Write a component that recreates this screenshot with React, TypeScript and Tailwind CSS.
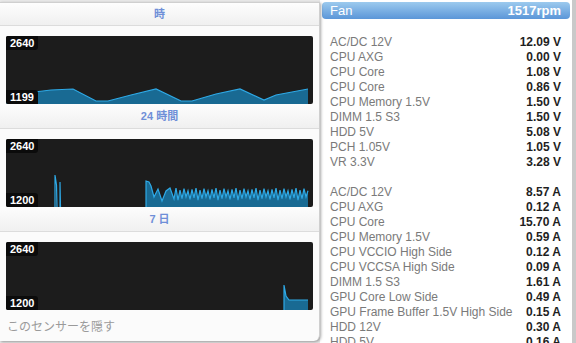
import React from 'react'

const CH_W = 304
const CH_H = 68

function hourPoints(): [number, number][] {
  return [
    [0, 62], [20, 57], [45, 54], [67, 53], [90, 65], [102, 65], [125, 59], [150, 53],
    [175, 65], [186, 65], [210, 58], [234, 53], [258, 64], [270, 59], [302, 53],
  ]
}

function dayPoints(): [number, number][] {
  const pts: [number, number][] = [
    [140, 68], [140, 42], [143, 43], [145, 47], [148, 58], [152, 50], [156, 62],
    [160, 52], [164, 49], [168, 60],
  ]
  let up = true
  for (let x = 170; x <= 302; x += 2) {
    const v = (x * 7) % 5
    pts.push([x, up ? 49 + v * 0.7 : 58 + v * 0.8])
    up = !up
  }
  return pts
}

function weekPoints(): [number, number][] {
  return [[278, 68], [278, 43], [280, 54], [283, 58], [302, 58]]
}

function toPath(pts: [number, number][]) {
  return pts.map((p, i) => `${i === 0 ? 'M' : 'L'}${p[0]},${p[1]}`).join(' ')
}

function Chart({ pts, min, spikes }: { pts: [number, number][]; min: string; spikes?: boolean }) {
  const line = toPath(pts)
  const fill = `${line} L${pts[pts.length - 1][0]},${CH_H} L${pts[0][0]},${CH_H} Z`
  return (
    <div className="relative mx-[6px] h-[68px] overflow-hidden rounded-[2px] bg-[#1c1c1c]">
      <svg width={CH_W} height={CH_H} className="absolute inset-0">
        {spikes && (
          <g stroke="#2ea9e6" strokeWidth="1.2" fill="none">
            <path d="M49,68 L49,36 L50.5,46 L51,68" />
            <path d="M54,68 L54,43 L54.5,68" />
          </g>
        )}
        <path d={fill} fill="#196a93" />
        <path d={line} fill="none" stroke="#2ea9e6" strokeWidth="1.2" />
      </svg>
      <div className="absolute left-0 top-0 rounded-br-[3px] bg-[#0b0b0b] px-[4px] py-[1px] text-[11px] font-bold leading-[12px] text-white">
        2640
      </div>
      <div className="absolute bottom-0 left-0 rounded-tr-[3px] bg-[#0b0b0b] px-[4px] py-[1px] text-[11px] font-bold leading-[12px] text-white">
        {min}
      </div>
    </div>
  )
}

function Header({ label, h }: { label: string; h: string }) {
  return (
    <div
      className={`${h} flex items-center justify-center border-b border-[#dcdcdc] bg-gradient-to-b from-[#fdfdfd] to-[#f0f0f0] text-[11px] font-bold text-[#6f8fd8]`}
    >
      {label}
    </div>
  )
}

const volts = [
  ['AC/DC 12V', '12.09 V'],
  ['CPU AXG', '0.00 V'],
  ['CPU Core', '1.08 V'],
  ['CPU Core', '0.86 V'],
  ['CPU Memory 1.5V', '1.50 V'],
  ['DIMM 1.5 S3', '1.50 V'],
  ['HDD 5V', '5.08 V'],
  ['PCH 1.05V', '1.05 V'],
  ['VR 3.3V', '3.28 V'],
]

const amps = [
  ['AC/DC 12V', '8.57 A'],
  ['CPU AXG', '0.12 A'],
  ['CPU Core', '15.70 A'],
  ['CPU Memory 1.5V', '0.59 A'],
  ['CPU VCCIO High Side', '0.12 A'],
  ['CPU VCCSA High Side', '0.09 A'],
  ['DIMM 1.5 S3', '1.61 A'],
  ['GPU Core Low Side', '0.49 A'],
  ['GPU Frame Buffer 1.5V High Side', '0.15 A'],
  ['HDD 12V', '0.30 A'],
  ['HDD 5V', '0.16 A'],
]

function Rows({ rows }: { rows: string[][] }) {
  return (
    <div className="flex flex-col">
      {rows.map(([k, v], i) => (
        <div key={i} className="flex h-[15px] items-center justify-between text-[12px]">
          <span className="text-[#7a7a7a]">{k}</span>
          <span className="font-bold text-[#1f1f1f]">{v}</span>
        </div>
      ))}
    </div>
  )
}

export default function App() {
  return (
    <div
      className="flex h-[343px] w-[576px] overflow-hidden bg-[#e9e9e9]"
      style={{ fontFamily: '"Liberation Sans", "Noto Sans CJK JP", sans-serif' }}
    >
      <div className="relative z-10 mt-[2px] flex h-[339px] w-[320px] shrink-0 flex-col rounded-br-[6px] border-t border-r border-[#cfcfcf] bg-[#fbfbfb] shadow-[1px_1px_3px_rgba(0,0,0,0.35)]">
        <Header label="時" h="h-[23px]" />
        <div className="pt-[10px]">
          <Chart pts={hourPoints()} min="1199" />
        </div>
        <Header label="24 時間" h="h-[25px]" />
        <div className="pt-[10px]">
          <Chart pts={dayPoints()} min="1200" spikes />
        </div>
        <Header label="7 日" h="h-[25px]" />
        <div className="pt-[10px]">
          <Chart pts={weekPoints()} min="1200" />
        </div>
        <div className="px-[7px] pt-[8px] text-[12px] text-[#9a9a9a]">このセンサーを隠す</div>
      </div>
      <div className="flex w-[252px] shrink-0 flex-col bg-white pt-[2px]">
        <div className="mx-[2px] flex h-[17px] items-center justify-between rounded-[4px] bg-gradient-to-b from-[#9ccaee] to-[#5b96d8] pl-[8px] pr-[9px] text-[13px] text-white">
          <span>Fan</span>
          <span className="font-bold">1517rpm</span>
        </div>
        <div className="mt-[6px] h-px bg-[#dadada]" />
        <div className="pl-[10px] pr-[11px] pt-[9px]">
          <Rows rows={volts} />
        </div>
        <div className="mt-[7px] h-px bg-[#dadada]" />
        <div className="pl-[10px] pr-[11px] pt-[8px]">
          <Rows rows={amps} />
        </div>
      </div>
      <div className="flex-1 bg-[#c9c9c9]" />
    </div>
  )
}
